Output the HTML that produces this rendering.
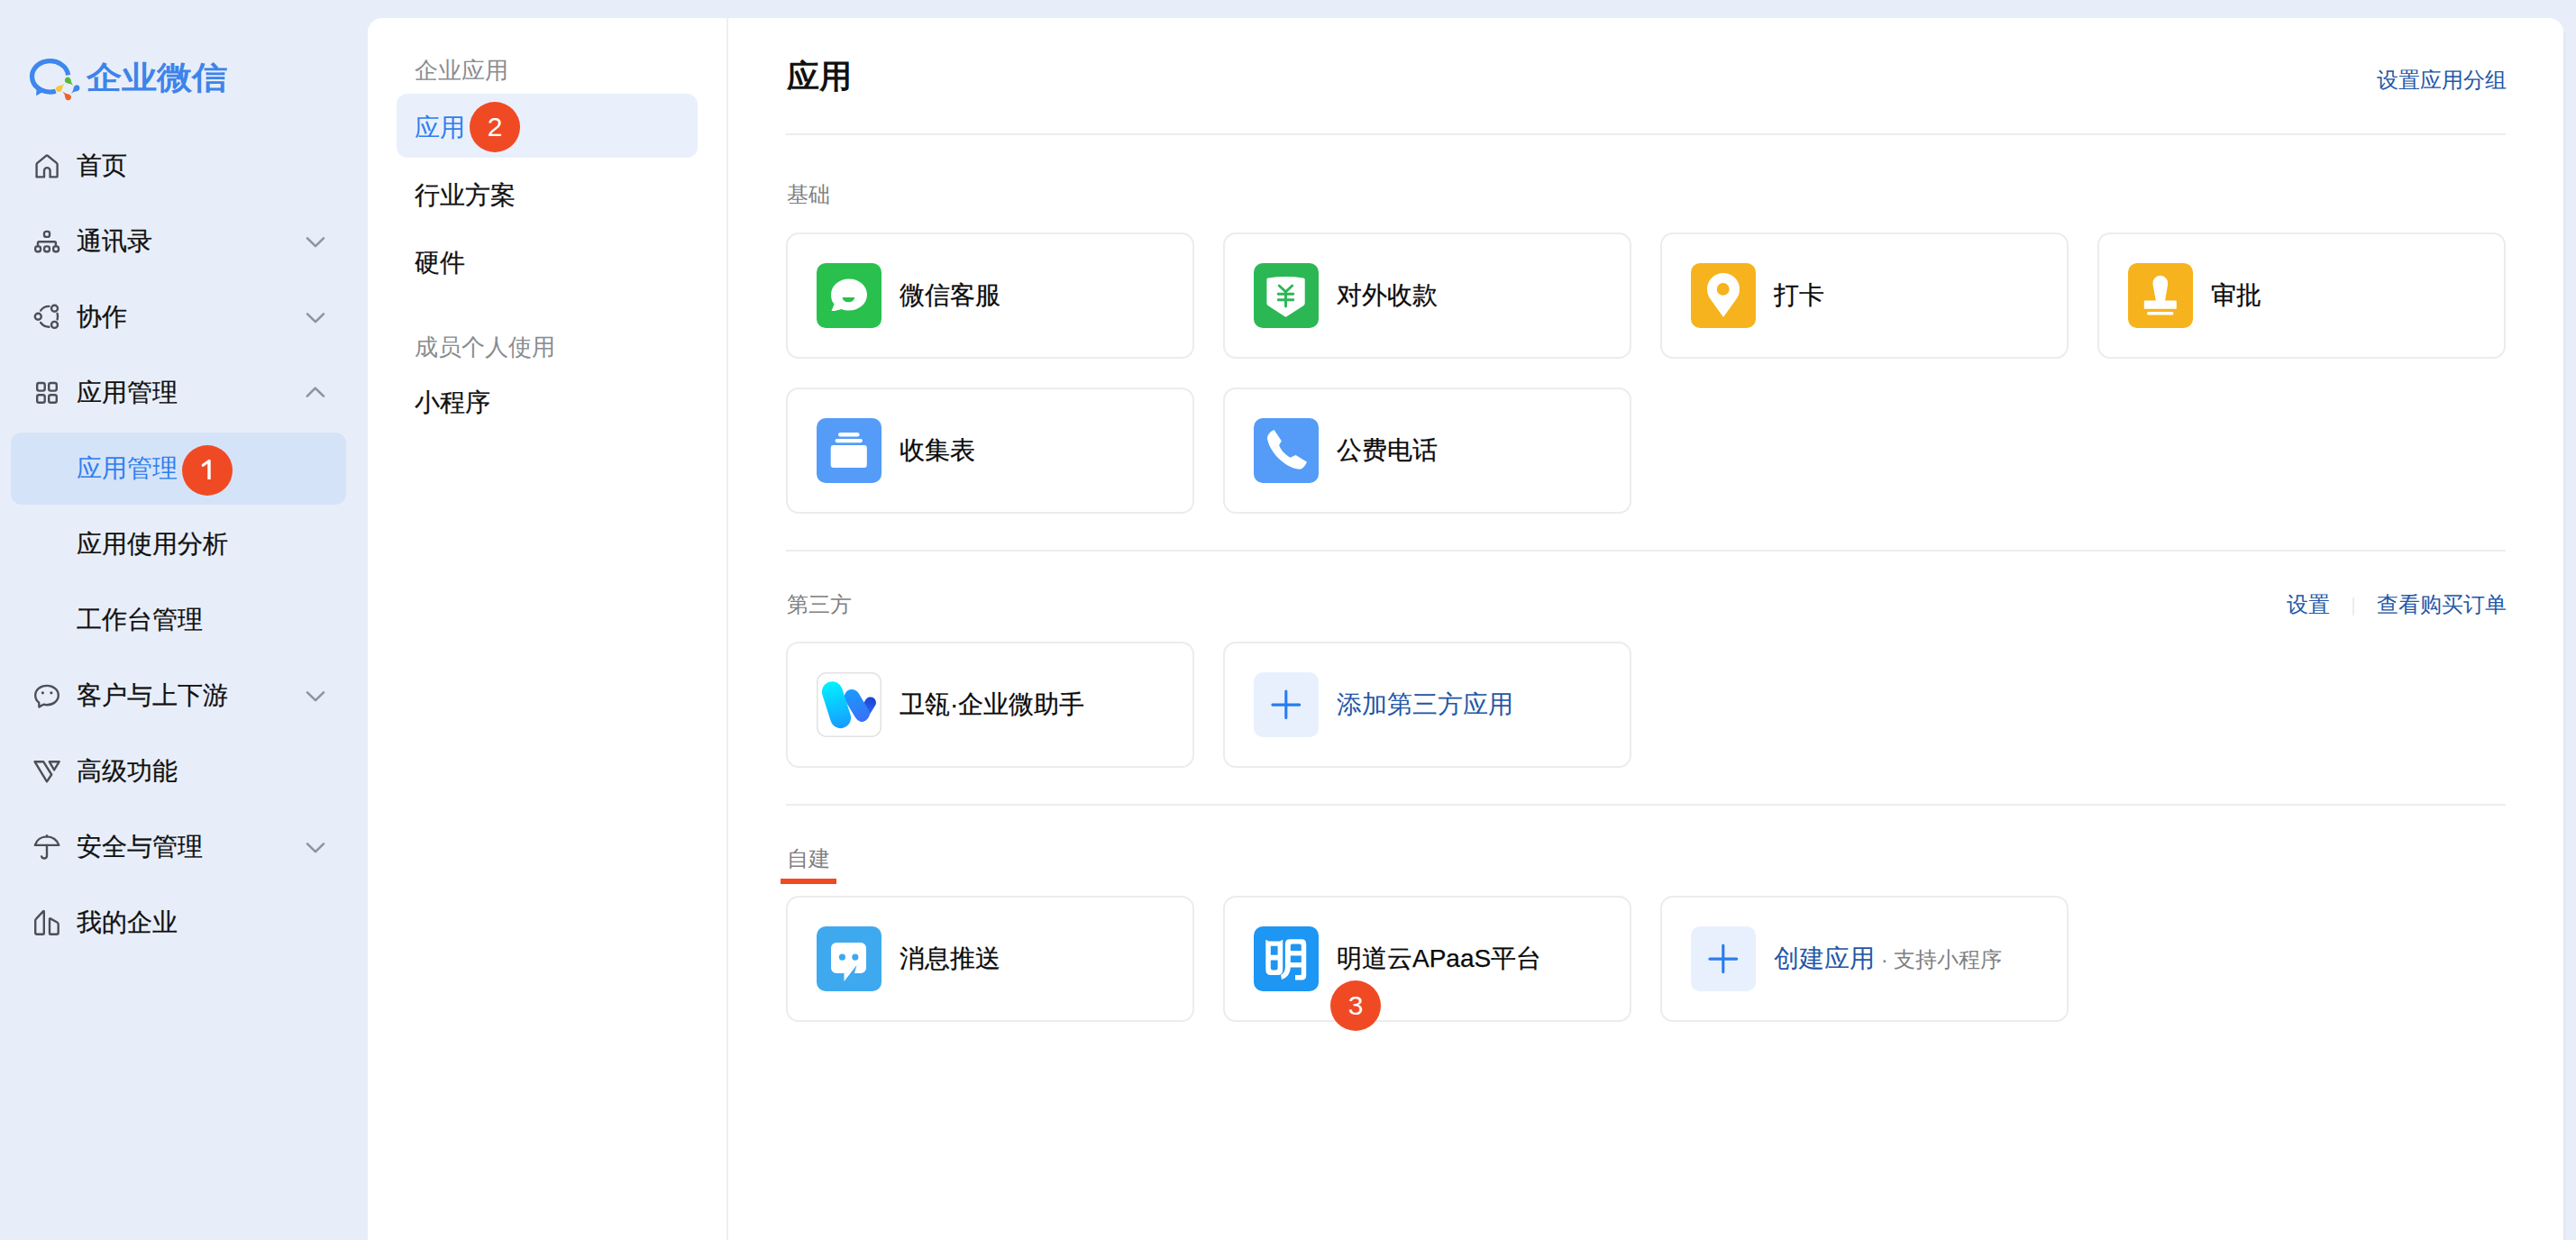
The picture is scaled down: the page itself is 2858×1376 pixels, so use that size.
<!DOCTYPE html>
<html><head><meta charset="utf-8">
<style>
*{margin:0;padding:0;box-sizing:border-box}
html,body{width:2858px;height:1376px;overflow:hidden;background:#e8eef9;font-family:"Liberation Sans",sans-serif;color:#1f1f1f}
.a{position:absolute;white-space:nowrap}
.nav{font-size:28px;line-height:40px;color:#111;-webkit-text-stroke:0.25px currentColor}
.panel{position:absolute;left:408px;top:20px;width:2436px;height:1400px;background:#fff;border-radius:16px 16px 0 0}
.sub{font-size:28px;line-height:40px;color:#111;-webkit-text-stroke:0.25px currentColor}
.grp{font-size:26px;line-height:36px;color:#898c90}
.badge{position:absolute;width:56px;height:56px;border-radius:50%;background:#f04a24;color:#fff;font-size:30px;line-height:56px;text-align:center}
.card{position:absolute;width:453px;height:140px;border:2px solid #ececec;border-radius:14px;background:#fff}
.card .ic{position:absolute;left:32px;top:32px;width:72px;height:72px}
.card .t{position:absolute;left:124px;top:0;line-height:136px;font-size:28px;color:#0a0a0a;white-space:nowrap;-webkit-text-stroke:0.25px currentColor}
.sect{font-size:24px;line-height:36px;color:#7f7f7f}
.hr{position:absolute;left:872px;width:1908px;height:2px;background:#ededed}
.link{font-size:24px;line-height:36px;color:#2356a6}
</style></head><body>
<svg class="a" style="left:28px;top:58px" width="65" height="60" viewBox="0 0 65 60">
<path d="M47.6 25.4 A20.1 17.2 0 1 0 33.8 43.3" fill="none" stroke="#3d87ee" stroke-width="5.3"/>
<path d="M13 35.5 L12.1 47 Q12 48.3 13.2 47.8 L22 42.4 Z" fill="#3d87ee"/>
<path d="M46.26 34.27 A3.40 3.40 0 1 1 50.43 29.95 Q51.11 34.78 53.20 36.80 Q51.11 34.78 46.26 34.27 Z" fill="#57b93a"/>
<path d="M40.52 41.80 A3.40 3.40 0 1 1 36.41 37.42 Q41.27 36.98 43.80 34.60 Q41.27 36.98 40.52 41.80 Z" fill="#f5c643"/>
<path d="M48.69 46.65 A3.40 3.40 0 1 1 44.45 50.89 Q43.85 46.05 41.40 43.60 Q43.85 46.05 48.69 46.65 Z" fill="#ec632c"/>
<path d="M53.85 38.71 A3.40 3.40 0 1 1 58.09 42.95 Q53.25 43.55 50.80 46.00 Q53.25 43.55 53.85 38.71 Z" fill="#3d87ee"/>
</svg>
<div class="a" style="left:96px;top:60px;font-size:39px;line-height:52px;font-weight:bold;color:#3d84ea;transform:scaleY(0.89);transform-origin:0 26px">企业微信</div>
<div class="a" style="left:12px;top:480px;width:372px;height:80px;border-radius:12px;background:#d5e3f8"></div>
<svg class="a" style="left:30px;top:160px" width="45" height="45" viewBox="0 0 45 45"><path d="M10.6 36.4 V22.6 Q10.6 21.6 11.4 20.9 L21.2 12.8 Q22 12.2 22.8 12.8 L32.8 20.9 Q33.6 21.6 33.6 22.6 V35.4 Q33.6 36.4 32.6 36.4 H25.6 V29.4 A3.3 3.3 0 0 0 19 29.4 V36.4 H11.6 Q10.6 36.4 10.6 35.4 Z" stroke="#4b5056" stroke-width="2.4" fill="none" stroke-linecap="round" stroke-linejoin="round"/></svg>
<div class="a nav" style="left:85px;top:164px">首页</div>
<svg class="a" style="left:30px;top:245px" width="45" height="45" viewBox="0 0 45 45"><rect x="19" y="11.9" width="6" height="6" rx="2.2" stroke="#4b5056" stroke-width="2.4" fill="none" stroke-linecap="round" stroke-linejoin="round"/><path d="M12 28 V24.5 Q12 23.2 13.3 23.2 H30.6 Q31.9 23.2 31.9 24.5 V28" stroke="#4b5056" stroke-width="2.4" fill="none" stroke-linecap="round" stroke-linejoin="round"/><rect x="9.2" y="28.4" width="5.8" height="5.8" rx="2.2" stroke="#4b5056" stroke-width="2.4" fill="none" stroke-linecap="round" stroke-linejoin="round"/><rect x="19.1" y="28.4" width="5.8" height="5.8" rx="2.2" stroke="#4b5056" stroke-width="2.4" fill="none" stroke-linecap="round" stroke-linejoin="round"/><rect x="29.2" y="28.4" width="5.8" height="5.8" rx="2.2" stroke="#4b5056" stroke-width="2.4" fill="none" stroke-linecap="round" stroke-linejoin="round"/></svg>
<div class="a nav" style="left:85px;top:248px">通讯录</div>
<svg class="a" style="left:330px;top:250px" width="40" height="40" viewBox="0 0 40 40"><path d="M11 14.3 L20 23.2 L29 14.3" stroke="#8e959f" stroke-width="2.6" fill="none" stroke-linecap="round" stroke-linejoin="round"/></svg>
<svg class="a" style="left:30px;top:329px" width="45" height="45" viewBox="0 0 45 45"><circle cx="30.5" cy="13.2" r="3.5" stroke="#4b5056" stroke-width="2.4" fill="none" stroke-linecap="round" stroke-linejoin="round"/><circle cx="12.3" cy="22.3" r="3.5" stroke="#4b5056" stroke-width="2.4" fill="none" stroke-linecap="round" stroke-linejoin="round"/><circle cx="30.5" cy="31.4" r="3.5" stroke="#4b5056" stroke-width="2.4" fill="none" stroke-linecap="round" stroke-linejoin="round"/><path d="M15.1 15.6 A11.4 11.4 0 0 1 24.4 10.9" stroke="#4b5056" stroke-width="2.4" fill="none" stroke-linecap="round" stroke-linejoin="round"/><path d="M33.6 19 A11.4 11.4 0 0 1 33.6 25.4" stroke="#4b5056" stroke-width="2.4" fill="none" stroke-linecap="round" stroke-linejoin="round"/><path d="M15.1 29 A11.4 11.4 0 0 0 24.4 33.7" stroke="#4b5056" stroke-width="2.4" fill="none" stroke-linecap="round" stroke-linejoin="round"/></svg>
<div class="a nav" style="left:85px;top:332px">协作</div>
<svg class="a" style="left:330px;top:334px" width="40" height="40" viewBox="0 0 40 40"><path d="M11 14.3 L20 23.2 L29 14.3" stroke="#8e959f" stroke-width="2.6" fill="none" stroke-linecap="round" stroke-linejoin="round"/></svg>
<svg class="a" style="left:30px;top:413px" width="45" height="45" viewBox="0 0 45 45"><rect x="11.2" y="12" width="8.5" height="8.6" rx="2" stroke="#4b5056" stroke-width="2.4" fill="none" stroke-linecap="round" stroke-linejoin="round"/><rect x="24.2" y="12" width="8.6" height="8.6" rx="2" stroke="#4b5056" stroke-width="2.4" fill="none" stroke-linecap="round" stroke-linejoin="round"/><rect x="11.2" y="25.2" width="8.5" height="8.6" rx="2" stroke="#4b5056" stroke-width="2.4" fill="none" stroke-linecap="round" stroke-linejoin="round"/><rect x="24.2" y="25.2" width="8.6" height="8.6" rx="2" stroke="#4b5056" stroke-width="2.4" fill="none" stroke-linecap="round" stroke-linejoin="round"/></svg>
<div class="a nav" style="left:85px;top:416px">应用管理</div>
<svg class="a" style="left:330px;top:418px" width="40" height="40" viewBox="0 0 40 40"><path d="M10.8 21.6 L19.8 12.7 L29 21.6" stroke="#8e959f" stroke-width="2.6" fill="none" stroke-linecap="round" stroke-linejoin="round"/></svg>
<div class="a nav" style="left:85px;top:584px">应用使用分析</div>
<div class="a nav" style="left:85px;top:668px">工作台管理</div>
<svg class="a" style="left:30px;top:749px" width="45" height="45" viewBox="0 0 45 45"><path d="M13.2 30.6 C10.3 28.5 9.2 25.6 9.2 22.6 C9.2 16.3 15 11.9 22 11.9 C29 11.9 34.8 16.3 34.8 22.6 C34.8 28.9 29 33.2 22 33.2 C20.6 33.2 19.4 33.1 18.2 32.7 L13.5 35.6 Z" stroke="#4b5056" stroke-width="2.4" fill="none" stroke-linecap="round" stroke-linejoin="round"/><circle cx="17.4" cy="19.8" r="1.6" fill="#4b5056"/><circle cx="26.9" cy="19.8" r="1.6" fill="#4b5056"/></svg>
<div class="a nav" style="left:85px;top:752px">客户与上下游</div>
<svg class="a" style="left:330px;top:754px" width="40" height="40" viewBox="0 0 40 40"><path d="M11 14.3 L20 23.2 L29 14.3" stroke="#8e959f" stroke-width="2.6" fill="none" stroke-linecap="round" stroke-linejoin="round"/></svg>
<svg class="a" style="left:30px;top:833px" width="45" height="45" viewBox="0 0 45 45"><path d="M8.5 12.2 H18.1 L27.2 26.5 L22 34.3 Z" stroke="#4b5056" stroke-width="2.4" fill="none" stroke-linecap="round" stroke-linejoin="round"/><path d="M24.7 12.2 H35.7 L30.1 21.4 Z" stroke="#4b5056" stroke-width="2.4" fill="none" stroke-linecap="round" stroke-linejoin="round"/></svg>
<div class="a nav" style="left:85px;top:836px">高级功能</div>
<svg class="a" style="left:30px;top:917px" width="45" height="45" viewBox="0 0 45 45"><path d="M8.9 20.9 C10.5 15.1 15.7 11.4 22 11.4 C28.3 11.4 33.6 15.1 35.3 20.9 Z" stroke="#4b5056" stroke-width="2.4" fill="none" stroke-linecap="round" stroke-linejoin="round"/><path d="M22 10.2 V11.4" stroke="#4b5056" stroke-width="2.4" fill="none" stroke-linecap="round" stroke-linejoin="round"/><path d="M22 21 V33.4 A3.1 3.1 0 0 1 16.1 33.4" stroke="#4b5056" stroke-width="2.4" fill="none" stroke-linecap="round" stroke-linejoin="round"/></svg>
<div class="a nav" style="left:85px;top:920px">安全与管理</div>
<svg class="a" style="left:330px;top:922px" width="40" height="40" viewBox="0 0 40 40"><path d="M11 14.3 L20 23.2 L29 14.3" stroke="#8e959f" stroke-width="2.6" fill="none" stroke-linecap="round" stroke-linejoin="round"/></svg>
<svg class="a" style="left:30px;top:1001px" width="45" height="45" viewBox="0 0 45 45"><path d="M18.8 10.3 V34.8 Q18.8 35.8 17.8 35.8 H11.2 Q9.2 35.8 9.2 33.8 V20.8 Q9.2 19.5 10.1 18.6 L17.6 10.6 Q18.8 9.6 18.8 10.3 Z" stroke="#4b5056" stroke-width="2.4" fill="none" stroke-linecap="round" stroke-linejoin="round"/><path d="M25 19.1 Q25 17.9 26 18.4 L33.4 22.5 Q34.7 23.3 34.7 24.8 V33.8 Q34.7 35.8 32.7 35.8 H26 Q25 35.8 25 34.8 Z" stroke="#4b5056" stroke-width="2.4" fill="none" stroke-linecap="round" stroke-linejoin="round"/></svg>
<div class="a nav" style="left:85px;top:1004px">我的企业</div>
<div class="a nav" style="left:85px;top:500px;color:#2f7ff0;-webkit-text-stroke:0">应用管理</div>
<div class="badge" style="left:202px;top:494px"></div><svg class="a" style="left:202px;top:494px" width="56" height="56" viewBox="0 0 56 56"><path d="M30 17.5 V38" stroke="#fff" stroke-width="3.4" stroke-linecap="butt"/><path d="M23.2 22.3 L30.2 17.3" stroke="#fff" stroke-width="3" stroke-linecap="round"/></svg>

<div class="panel"></div>
<div class="a" style="left:2844px;top:36px;width:3px;height:1340px;background:#e2e8f5"></div>
<div class="a" style="left:806px;top:20px;width:2px;height:1360px;background:#efefef"></div>

<div class="a grp" style="left:460px;top:60px">企业应用</div>
<div class="a" style="left:440px;top:104px;width:334px;height:71px;border-radius:12px;background:#e9f0fc"></div>
<div class="a sub" style="left:460px;top:122px;color:#2f7ff0;-webkit-text-stroke:0">应用</div>
<div class="badge" style="left:521px;top:113px">2</div>
<div class="a sub" style="left:460px;top:197px">行业方案</div>
<div class="a sub" style="left:460px;top:272px">硬件</div>
<div class="a grp" style="left:460px;top:367px">成员个人使用</div>
<div class="a sub" style="left:460px;top:427px">小程序</div>

<div class="a" style="left:873px;top:63px;font-size:36px;line-height:44px;font-weight:bold;color:#111">应用</div>
<div class="a link" style="left:2637px;top:71px">设置应用分组</div>
<div class="hr" style="top:148px"></div>

<div class="a sect" style="left:873px;top:198px">基础</div>
<div class="hr" style="top:610px"></div>
<div class="a sect" style="left:873px;top:653px">第三方</div>
<div class="a link" style="left:2537px;top:653px">设置</div>
<div class="a" style="left:2610px;top:663px;width:2px;height:20px;background:#ececec"></div>
<div class="a link" style="left:2637px;top:653px">查看购买订单</div>
<div class="hr" style="top:892px"></div>
<div class="a sect" style="left:873px;top:935px">自建</div>
<div class="a" style="left:866px;top:975px;width:62px;height:6px;background:#f04a24"></div>
<div class="card" style="left:872px;top:258px"><svg class="ic" width="72" height="72" viewBox="0 0 72 72"><rect width="72" height="72" rx="10" fill="#29c04e"/><path d="M36 17.5 C47 17.5 56 25 56 35 C56 45 47 52.5 36 52.5 C32.5 52.5 30 52 27.5 51 C24 52 20 53.5 16.5 53 L19.5 45.5 C17 42.5 16 39 16 35 C16 25 25 17.5 36 17.5 Z" fill="#fff"/><path d="M28.6 38 H42.2 A6.8 5.2 0 0 1 28.6 38 Z" fill="#29c04e"/></svg><div class="t">微信客服</div></div>
<div class="card" style="left:1357px;top:258px"><svg class="ic" width="72" height="72" viewBox="0 0 72 72"><rect width="72" height="72" rx="10" fill="#2cb755"/><path d="M14.4 18.2 Q14.4 16.6 16 16.4 Q35.5 13.6 55.1 16.4 Q56.7 16.6 56.7 18.2 V44.5 Q56.7 46 55.5 46.9 L36.5 59.3 Q35.5 60 34.5 59.3 L15.6 46.9 Q14.4 46 14.4 44.5 Z" fill="#fff"/><path d="M28.2 25 L35.5 31.8 L42.7 25 M27.2 34.3 H43.8 M27.2 40.8 H43.8 M35.5 31.8 V48" stroke="#2cb755" stroke-width="2.9" fill="none" stroke-linecap="round"/></svg><div class="t">对外收款</div></div>
<div class="card" style="left:1842px;top:258px"><svg class="ic" width="72" height="72" viewBox="0 0 72 72"><rect width="72" height="72" rx="10" fill="#f6b31d"/><path d="M36 60 L21.35 39.45 A18 18 0 1 1 50.65 39.45 Z" fill="#fff"/><circle cx="35.7" cy="28.9" r="6.9" fill="#f6b31d"/></svg><div class="t">打卡</div></div>
<div class="card" style="left:2327px;top:258px"><svg class="ic" width="72" height="72" viewBox="0 0 72 72"><rect width="72" height="72" rx="10" fill="#f6b31d"/><path d="M30.8 41.5 L27.5 23.4 A8.4 8.4 0 1 1 44.1 23.4 L41.1 41.5 H52.8 Q53.8 41.5 53.8 42.5 V50.7 H17.8 V42.5 Q17.8 41.5 18.8 41.5 Z" fill="#fff"/><rect x="21.2" y="54.1" width="29.1" height="3.4" rx="1.3" fill="#fff"/></svg><div class="t">审批</div></div>
<div class="card" style="left:872px;top:430px"><svg class="ic" width="72" height="72" viewBox="0 0 72 72"><rect width="72" height="72" rx="10" fill="#549cf8"/><rect x="24" y="16.1" width="23.6" height="4.4" rx="2.2" fill="#fff"/><rect x="20.5" y="22.9" width="30.5" height="4.3" rx="2.15" fill="#fff"/><rect x="15.7" y="30" width="40.1" height="25.1" rx="3" fill="#fff"/></svg><div class="t">收集表</div></div>
<div class="card" style="left:1357px;top:430px"><svg class="ic" width="72" height="72" viewBox="0 0 72 72"><rect width="72" height="72" rx="10" fill="#549cf8"/><path d="M22.6 13 L30.8 25.3 L28.1 30.1 C30.5 36 35 40.8 40.4 43.8 L46.6 41.1 L58.9 48.6 C57.5 52.5 54.5 56.6 50.7 56.8 C35 55.5 17.5 38 15 22.5 C15.2 17.8 18.5 14.8 22.6 13 Z" fill="#fff"/></svg><div class="t">公费电话</div></div>
<div class="card" style="left:872px;top:712px"><svg class="ic" width="72" height="72" viewBox="0 0 72 72"><defs><linearGradient id="g1" gradientUnits="userSpaceOnUse" x1="17" y1="10" x2="27" y2="62"><stop offset="0" stop-color="#00f3ff"/><stop offset="1" stop-color="#169bff"/></linearGradient><linearGradient id="g2" gradientUnits="userSpaceOnUse" x1="39" y1="19" x2="50" y2="55"><stop offset="0" stop-color="#1a9bff"/><stop offset="1" stop-color="#3a70f6"/></linearGradient><linearGradient id="g3" gradientUnits="userSpaceOnUse" x1="60" y1="27" x2="50" y2="52"><stop offset="0" stop-color="#1843d3"/><stop offset="1" stop-color="#3d74f8"/></linearGradient></defs>
<rect x="0.75" y="0.75" width="70.5" height="70.5" rx="10" fill="#fff" stroke="#e2e2e2" stroke-width="1.5"/>
<path d="M59.8 33.6 L50.4 48.8" stroke="url(#g3)" stroke-width="12.4" stroke-linecap="round"/>
<path d="M39.2 27.4 L50.3 46" stroke="url(#g2)" stroke-width="17" stroke-linecap="round"/>
<path d="M17.4 21.8 L26.6 50.6" stroke="url(#g1)" stroke-width="23" stroke-linecap="round"/></svg><div class="t">卫瓴·企业微助手</div></div>
<div class="card" style="left:1357px;top:712px"><svg class="ic" width="72" height="72" viewBox="0 0 72 72"><rect width="72" height="72" rx="10" fill="#e9f0fd"/><path d="M20.9 36.1 H50.7 M35.8 21 V50.6" stroke="#2a7cf0" stroke-width="3.1" stroke-linecap="round"/></svg><div class="t" style="color:#2356a6;-webkit-text-stroke:0">添加第三方应用</div></div>
<div class="card" style="left:872px;top:994px"><svg class="ic" width="72" height="72" viewBox="0 0 72 72"><rect width="72" height="72" rx="10" fill="#3fa9f0"/><path d="M22 18 H49 A6 6 0 0 1 55 24 V46 A6 6 0 0 1 49 52 H42 L44.5 43.1 L30.5 61 V52 H22 A6 6 0 0 1 16 46 V24 A6 6 0 0 1 22 18 Z" fill="#fff"/><circle cx="28.4" cy="34.1" r="3.6" fill="#3fa9f0"/><circle cx="42.8" cy="34.1" r="3.6" fill="#3fa9f0"/></svg><div class="t">消息推送</div></div>
<div class="card" style="left:1357px;top:994px"><svg class="ic" width="72" height="72" viewBox="0 0 72 72"><rect width="72" height="72" rx="10" fill="#1e96f3"/><path fill="#fff" fill-rule="evenodd" d="M13.3 14.8 L17 16.4 H29 L32.2 14.8 V48 Q32.2 54 26.5 54 H19 Q13.3 54 13.3 48 Z M18.8 21.8 H26.6 V31.8 H18.8 Z M18.8 37.6 H26.6 V46.2 Q26.6 48.6 24.2 48.6 H21.2 Q18.8 48.6 18.8 46.2 Z"/><path fill="#fff" fill-rule="evenodd" d="M40 14.3 H53 Q58.2 14.3 58.2 19.5 V54.5 Q58.2 59.5 53.2 59.5 H46 V54 H51.5 Q52.8 54 52.8 52.7 V45.5 H40.8 Q40.5 55.5 31 59.1 L30.1 53.8 Q34.9 51.5 34.9 45 V19.5 Q34.9 14.3 40 14.3 Z M40.8 21.3 Q40.8 19.4 42.7 19.4 H50.9 Q52.8 19.4 52.8 21.3 V27 H40.8 Z M40.8 32.5 H52.8 V40 H40.8 Z"/></svg><div class="t">明道云APaaS平台</div></div>
<div class="card" style="left:1842px;top:994px"><svg class="ic" width="72" height="72" viewBox="0 0 72 72"><rect width="72" height="72" rx="10" fill="#e9f0fd"/><path d="M20.9 36.1 H50.7 M35.8 21 V50.6" stroke="#2a7cf0" stroke-width="3.1" stroke-linecap="round"/></svg><div class="t"><span style="color:#2356a6;-webkit-text-stroke:0">创建应用</span><span style="color:#7f7f7f;font-size:24px;-webkit-text-stroke:0"> · 支持小程序</span></div></div>
<div class="badge" style="left:1476px;top:1088px">3</div>
</body></html>
